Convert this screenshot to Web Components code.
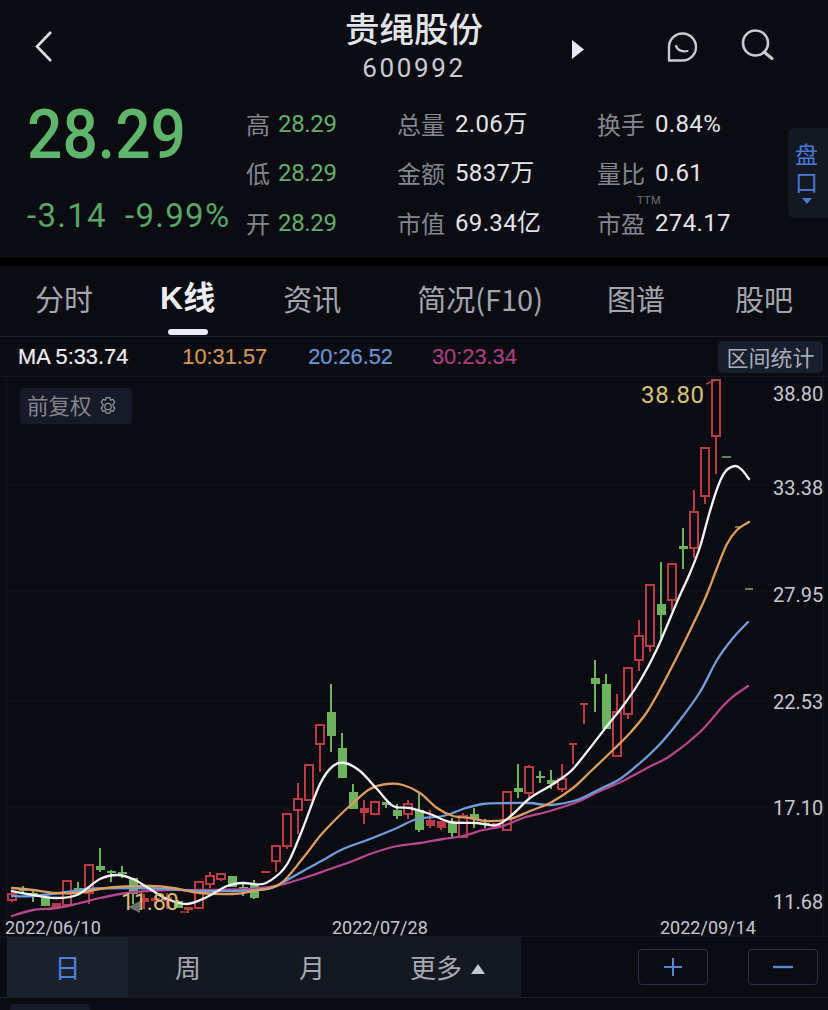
<!DOCTYPE html>
<html lang="zh">
<head>
<meta charset="utf-8">
<title>贵绳股份</title>
<style>
    html, body { margin: 0; padding: 0; background: #0b0c11; }
    body { width: 828px; height: 1010px; overflow: hidden; font-family: Roboto, "Noto Sans CJK SC", sans-serif; }
    .sep { height: 8px; background: #000; }
</style>
</head>
<body>
<stock-title name="贵绳股份" code="600992"></stock-title>
<quote-panel>
    <stat-cell slot="c1" label="高" tone="green">28.29</stat-cell>
    <stat-cell slot="c1" label="低" tone="green">28.29</stat-cell>
    <stat-cell slot="c1" label="开" tone="green">28.29</stat-cell>
    <stat-cell slot="c2" label="总量">2.06万</stat-cell>
    <stat-cell slot="c2" label="金额">5837万</stat-cell>
    <stat-cell slot="c2" label="市值">69.34亿</stat-cell>
    <stat-cell slot="c3" label="换手">0.84%</stat-cell>
    <stat-cell slot="c3" label="量比">0.61</stat-cell>
    <stat-cell slot="c3" label="市盈" sup="TTM">274.17</stat-cell>
</quote-panel>
<div class="sep"></div>
<tab-bar>
    <tab-item gap="35">分时</tab-item>
    <tab-item gap="67" active>K线</tab-item>
    <tab-item gap="68">资讯</tab-item>
    <tab-item gap="76">简况(F10)</tab-item>
    <tab-item gap="64">图谱</tab-item>
    <tab-item gap="70">股吧</tab-item>
</tab-bar>
<ma-legend></ma-legend>
<kline-chart></kline-chart>
<period-bar></period-bar>
<foot-stub></foot-stub>

<script>
class StockTitle extends HTMLElement {
    constructor() {
        super();
        const shadow = this.attachShadow({mode: 'open'});
        shadow.innerHTML = `
            <style>
                :host { display: grid; grid-template-columns: 1fr 138px 1fr; height: 90px; background: #0b0c11; }
                .left { padding: 31px 0 0 35px; }
                .mid { text-align: center; color: #e4e5ea; white-space: nowrap; }
                .name { font: 500 34.5px/40px "Noto Sans CJK SC", sans-serif; margin-top: 7px; margin-left: -1px; margin-right: -1px; }
                .code { font: 400 26px/30px Roboto, sans-serif; letter-spacing: 2.6px; color: #c9cbd2; margin: 6px -20px 0; }
                .right { display: flex; align-items: flex-start; padding-top: 30px; }
                svg { display: block; }
            </style>
            <div class="left">
                <svg width="17" height="31" viewBox="0 0 17 31"><path d="M16 1 2 15.5 16 30" fill="none" stroke="#dfe0e5" stroke-width="2.6"/></svg>
            </div>
            <div class="mid">
                <div class="name">${this.getAttribute('name')}</div>
                <div class="code">${this.getAttribute('code')}</div>
            </div>
            <div class="right">
                <svg style="margin:10px 0 0 89px" width="12" height="19" viewBox="0 0 12 19"><path d="M0 0 12 9.5 0 19Z" fill="#e6e8f5"/></svg>
                <svg style="margin:1px 0 0 83px" width="31" height="31" viewBox="0 0 31 31"><path d="M2 29.5V15.5A13.5 13.5 0 1 1 15.5 29.5Z" fill="none" stroke="#c9cbd2" stroke-width="2.4" stroke-linejoin="round"/><path d="M9 15Q11.5 21.5 20.5 20" fill="none" stroke="#c9cbd2" stroke-width="2.2" stroke-linecap="round"/></svg>
                <svg style="margin:-1px 0 0 43px" width="33" height="31" viewBox="0 0 33 31"><circle cx="14.5" cy="14" r="12.5" fill="none" stroke="#c9cbd2" stroke-width="2.6"/><path d="M23 23 31 29.5" stroke="#c9cbd2" stroke-width="3" stroke-linecap="round"/></svg>
            </div>
        `;
    }
}

class StatCell extends HTMLElement {
    constructor() {
        super();
        const shadow = this.attachShadow({mode: 'open'});
        const label = this.getAttribute('label');
        const sup = this.getAttribute('sup');
        const green = this.getAttribute('tone') === 'green';
        shadow.innerHTML = `
            <style>
                :host { display: flex; align-items: center; height: 49.5px; white-space: nowrap; position: relative; }
                .label { font: 400 24px/30px "Noto Sans CJK SC", sans-serif; color: #83868f; margin-right: ${green ? 8 : 10}px; margin-left: -1px; }
                .value { font: 400 24px/30px Roboto, "Noto Sans CJK SC", sans-serif; letter-spacing: ${green ? -0.35 : 0.35}px; color: ${green ? '#63ae6b' : '#e3e4ea'}; }
                .sup { position: absolute; left: 39px; top: -3px; font: 400 11px/12px Roboto, sans-serif; color: #6d7079; letter-spacing: .4px; }
            </style>
            <span class="label">${label}</span><span class="value"><slot></slot></span>
            ${sup ? `<span class="sup">${sup}</span>` : ''}
        `;
    }
}

class QuotePanel extends HTMLElement {
    constructor() {
        super();
        const shadow = this.attachShadow({mode: 'open'});
        shadow.innerHTML = `
            <style>
                :host { display: grid; grid-template-columns: 247px 151px 200px 190px 40px; height: 168px; background: #0b0c11; position: relative; }
                .price { padding-left: 27px; color: #5fb56b; white-space: nowrap; }
                .big { font: 500 68.5px/80px Roboto, sans-serif; transform: scaleX(.91); transform-origin: left top; margin-top: 5px; width: 200px; }
                .chg { font: 400 33px/40px Roboto, sans-serif; color: #58a565; letter-spacing: 1.3px; margin-top: 21px; display: flex; gap: 18px; }
                .col { padding-top: 9px; }
                .side { align-self: start; margin-top: 38px; height: 90px; background: #131823; border-radius: 6px 0 0 6px; color: #4a78d6; font: 400 23px/28px "Noto Sans CJK SC", sans-serif; text-align: center; padding: 11px 3px 0 0; box-sizing: border-box; }
                .side i { display: block; width: 0; margin: 3px auto 0; border: 5px solid transparent; border-top: 6px solid #4a78d6; border-bottom: 0; }
            </style>
            <div class="price">
                <div class="big">28.29</div>
                <div class="chg"><span>-3.14</span><span>-9.99%</span></div>
            </div>
            <div class="col"><slot name="c1"></slot></div>
            <div class="col"><slot name="c2"></slot></div>
            <div class="col"><slot name="c3"></slot></div>
            <div class="side">盘<br>口<i></i></div>
        `;
    }
}

class TabItem extends HTMLElement {
    constructor() {
        super();
        const shadow = this.attachShadow({mode: 'open'});
        const active = this.hasAttribute('active');
        shadow.innerHTML = `
            <style>
                :host { display: block; position: relative; margin-left: ${this.getAttribute('gap')}px; white-space: nowrap; line-height: 65px; font-size: ${active ? 32 : 29}px; color: ${active ? '#eceef6' : '#a2a5ae'}; font-weight: ${active ? 700 : 400}; font-family: ${active ? '"Liberation Sans", ' : ''}"Noto Sans CJK SC", sans-serif; }
                i { position: absolute; left: 8px; width: 40px; top: 63px; height: 6px; border-radius: 3px; background: #e8eaf5; }
            </style>
            <slot></slot>${active ? '<i></i>' : ''}
        `;
    }
}

class TabBar extends HTMLElement {
    constructor() {
        super();
        const shadow = this.attachShadow({mode: 'open'});
        shadow.innerHTML = `
            <style>
                :host { display: flex; height: 70px; background: #0b0c11; border-bottom: 1px solid #1e2027; }
            </style>
            <slot></slot>
        `;
    }
}

class MaLegend extends HTMLElement {
    constructor() {
        super();
        const shadow = this.attachShadow({mode: 'open'});
        const items = [
            ['MA 5:33.74', '#eeeff2', 18],
            ['10:31.57', '#cf955a', 54],
            ['20:26.52', '#6b94d2', 41],
            ['30:23.34', '#a73f7e', 39]
        ];
        shadow.innerHTML = `
            <style>
                :host { display: flex; align-items: center; height: 39px; background: #0b0c11; border-bottom: 1px solid #15171d; font: 400 21.8px/41px "Liberation Sans", sans-serif; white-space: nowrap; }
                span { -webkit-text-stroke: .2px currentColor; }
                button { all: unset; margin-left: auto; margin-right: 5px; width: 105px; height: 32px; text-align: center; background: #191e2c; border-radius: 5px; color: #a6abb9; font: 400 22px/31px "Noto Sans CJK SC", sans-serif; }
            </style>
            ${items.map(([text, color, gap]) => `<span style="color:${color};margin-left:${gap}px">${text}</span>`).join('')}
            <button>区间统计</button>
        `;
    }
}

class KlineChart extends HTMLElement {
    constructor() {
        super();
        const shadow = this.attachShadow({mode: 'open'});
        // x, wick top, wick bottom, body top, body bottom, kind (h hollow red, r solid red, g green)
        const candles = [
            [12,891,901,893,899,'h'],[23,885,893,888,890,'g'],[33,890,901,892,895,'g'],[45,896,905,897,905,'g'],
            [56,902,907,902,907,'r'],[67,880,904,880,904,'h'],[78,881,893,887,891,'g'],[89,864,903,864,892,'h'],
            [100,847,871,865,869,'g'],[111,869,881,870,872,'g'],[122,865,877,871,873,'g'],[133,877,903,877,893,'g'],
            [144,893,908,897,901,'r'],[155,895,905,897,900,'r'],[167,892,908,896,900,'r'],[178,899,907,900,907,'g'],
            [188,906,912,906,909,'r'],[199,881,907,881,907,'h'],[210,871,887,875,883,'h'],[221,873,880,873,878,'h'],
            [232,875,886,875,886,'g'],[243,883,895,886,890,'g'],[254,879,898,883,897,'g'],[265,870,872,870,872,'r'],
            [276,844,871,845,860,'h'],[287,813,848,813,845,'h'],[298,782,833,798,809,'h'],[309,764,799,764,799,'h'],
            [320,724,771,724,743,'h'],[331,683,751,711,735,'g'],[342,732,777,747,777,'g'],[353,783,808,791,808,'g'],
            [364,799,823,807,812,'r'],[375,801,813,801,813,'h'],[386,801,807,801,804,'g'],[397,803,818,809,815,'g'],
            [408,799,818,803,813,'h'],[419,792,831,809,829,'g'],[430,809,827,819,825,'r'],[441,820,829,820,827,'r'],
            [452,817,837,822,832,'g'],[463,812,836,815,836,'h'],[474,807,827,813,818,'g'],[485,818,827,822,824,'g'],
            [496,822,827,822,827,'r'],[507,791,829,791,829,'h'],[518,763,797,787,791,'g'],[529,764,798,766,792,'h'],
            [540,770,782,775,777,'g'],[551,769,788,779,783,'g'],[562,763,791,778,788,'h'],[573,743,763,743,745,'t'],
            [584,703,723,703,705,'t'],[595,659,711,677,683,'g'],[606,673,728,683,728,'g'],[617,693,755,711,755,'h'],
            [628,667,718,667,713,'h'],[639,619,670,635,659,'h'],[650,584,651,584,645,'h'],[661,561,637,603,614,'g'],
            [672,563,610,563,599,'h'],[683,527,568,545,548,'g'],[694,489,557,511,547,'h'],[705,447,503,447,495,'h'],
            [716,379,473,379,435,'h']
        ];
        const lines = [
            ['#b5468f', [[12,915],[33,909],[57,907],[80,902],[100,897],[120,893],[147,890],[167,889],[200,889],[250,888],[280,884],[310,875],[330,868],[353,860],[370,853],[397,845],[420,842],[443,838],[463,835],[483,829],[503,825],[523,817],[550,810],[577,801],[600,790],[623,780],[647,767],[670,755],[700,731],[723,705],[735,694],[748,685]]],
            ['#6f9ddc', [[12,895],[33,895],[67,891],[87,888],[133,887],[167,888],[200,890],[233,890],[267,888],[280,883],[303,870],[325,858],[343,848],[370,838],[397,827],[417,818],[443,815],[463,808],[483,803],[510,802],[530,802],[550,804],[577,799],[600,788],[620,778],[640,762],[660,743],[680,719],[700,691],[717,659],[733,637],[748,621]]],
            ['#dd9d5f', [[12,887],[33,889],[55,892],[77,892],[100,888],[117,886],[150,885],[173,887],[200,892],[233,893],[253,890],[280,883],[303,857],[320,835],[337,817],[353,802],[370,788],[387,783],[403,784],[420,792],[437,807],[453,815],[470,817],[487,820],[510,818],[530,810],[550,802],[573,787],[590,771],[613,749],[630,732],[647,711],[663,683],[680,650],[697,615],[707,593],[717,567],[727,543],[737,529],[749,521]]],
            ['#f4f4f6', [[12,890],[33,894],[55,897],[77,894],[100,878],[117,874],[133,878],[150,888],[167,898],[187,903],[207,896],[227,885],[243,882],[263,883],[280,872],[290,858],[303,827],[320,783],[333,765],[345,762],[360,770],[377,788],[393,805],[410,807],[430,813],[450,821],[477,822],[497,824],[513,813],[530,797],[550,785],[562,777],[573,768],[590,747],[607,725],[623,705],[640,680],[657,648],[677,601],[690,572],[700,546],[708,517],[717,488],[725,471],[735,465],[742,469],[749,478]]]
        ];
        const labels = [
            ['38.80',773,393,'axis'],['33.38',773,487,'axis'],['27.95',773,594,'axis'],['22.53',773,701,'axis'],['17.10',773,807,'axis'],['11.68',773,901,'axis'],
            ['2022/06/10',5,927,'date'],['2022/07/28',332,927,'date'],['2022/09/14',660,927,'date'],
            ['38.80',641,394,'peak'],['11.80',121,901,'low']
        ];
        const grid = [484, 590, 700, 806].map(y => `<path d="M6 ${y}H768" stroke="#13151b"/>`).join('');
        shadow.innerHTML = `
            <style>
                :host { display: block; position: relative; height: 559px; background: #0b0c11; }
                svg { position: absolute; left: 0; top: 0; }
                span { position: absolute; white-space: nowrap; font-family: Roboto, sans-serif; line-height: 1; transform: translateY(-50%); }
                .axis { font-size: 20px; color: #c4c8d3; }
                .date { font-size: 18px; color: #c4c8d3; }
                .peak { font-size: 24px; letter-spacing: .7px; color: #d6c279; }
                .low { font-size: 23px; letter-spacing: 0; color: #d2bc72; }
                .rights { position: absolute; left: 20px; top: 11px; width: 112px; height: 36px; background: #161b27; border-radius: 4px; display: flex; align-items: center; box-sizing: border-box; padding: 0 0 3px 7px; gap: 7px; color: #83868f; font: 400 21.5px/33px "Noto Sans CJK SC", sans-serif; }
            </style>
            <svg width="828" height="559" viewBox="0 376 828 559">
                <path d="M6.5 376V935" stroke="#13151b"/><path d="M823.5 376V935" stroke="#13151b"/>
                ${grid}
                ${this.drawCandles(candles)}
                <path d="M722 456H731M735 526H742M745 588H753" stroke="#7fa868" stroke-width="1.6"/>
                <path d="M706 383 716 379" stroke="#a8474c" stroke-width="1.4"/>
                <path d="M180 911H187" stroke="#b23c44" stroke-width="1.4"/>
                <path d="M140 900V912L128 906Z" fill="#6e6f72"/>
                ${lines.map(([color, pts]) => `<path d="${this.smooth(pts)}" fill="none" stroke="${color}" stroke-width="2.3" stroke-linecap="round"/>`).join('')}
            </svg>
            ${labels.map(([text, x, y, cls]) => `<span class="${cls}" style="left:${x}px;top:${y - 376}px">${text}</span>`).join('')}
            <div class="rights">前复权
                <svg style="position:static;margin-top:3px" width="18" height="19" viewBox="1.2 .8 15.6 16.4" fill="none" stroke="#8d9099" stroke-width="1.1"><path d="M7.4 1.2h3.2l.6 2.3 2.1-.7 1.6 2.6-1.6 1.7.1 1.8 1.5 1.6-1.6 2.7-2.1-.7-.6 2.3H7.4l-.6-2.3-2.1.7-1.6-2.7 1.5-1.6.1-1.8-1.6-1.7 1.6-2.6 2.1.7z" stroke-linejoin="round"/><circle cx="9" cy="9" r="2.8"/></svg>
            </div>
        `;
    }

    drawCandles(candles) {
        const red = '#b93b44', green = '#6db25f';
        return candles.map(([x, high, low, top, bottom, kind]) => {
            const stroke = kind === 'g' ? green : red;
            let out = `<path d="M${x} ${high}V${low}" stroke="${stroke}" stroke-width="2"/>`;
            if (kind === 'h') {
                out += `<rect x="${x - 4}" y="${top}" width="8" height="${bottom - top}" fill="#0b0c11" stroke="${stroke}" stroke-width="2"/>`;
            } else if (kind === 't') {
                out += `<path d="M${x - 4} ${high}H${x + 4}" stroke="${stroke}" stroke-width="2"/>`;
            } else {
                out += `<rect x="${x - 4}" y="${top}" width="9" height="${bottom - top}" fill="${stroke}"/>`;
            }
            return out;
        }).join('');
    }

    // catmull-rom through the points
    smooth(pts) {
        let d = `M${pts[0][0]} ${pts[0][1]}`;
        for (let i = 0; i < pts.length - 1; i++) {
            const p0 = pts[i - 1] || pts[i], p1 = pts[i], p2 = pts[i + 1], p3 = pts[i + 2] || p2;
            const c1x = p1[0] + (p2[0] - p0[0]) / 6, c1y = p1[1] + (p2[1] - p0[1]) / 6;
            const c2x = p2[0] - (p3[0] - p1[0]) / 6, c2y = p2[1] - (p3[1] - p1[1]) / 6;
            d += `C${c1x.toFixed(1)} ${c1y.toFixed(1)} ${c2x.toFixed(1)} ${c2y.toFixed(1)} ${p2[0]} ${p2[1]}`;
        }
        return d;
    }
}

class PeriodBar extends HTMLElement {
    constructor() {
        super();
        const shadow = this.attachShadow({mode: 'open'});
        shadow.innerHTML = `
            <style>
                :host { display: flex; align-items: center; height: 62px; background: #0b0c11; border-bottom: 1px solid #1c1e25; border-top: 1px solid #14161c; box-sizing: border-box; font: 400 26px/60px "Noto Sans CJK SC", sans-serif; color: #a6a9b2; position: relative; }
                .seg { display: flex; margin-left: 7px; width: 514px; height: 100%; background: #141821; }
                .seg div { text-align: center; white-space: nowrap; box-sizing: border-box; }
                .on { width: 121px; background: #1a202c; color: #4f7fe0; }
                .seg i { display: inline-block; margin-left: 9px; vertical-align: 4px; border: 7.5px solid transparent; border-top: 0; border-bottom: 10px solid #c3c8d8; }
                .zoom { width: 70px; height: 36px; border: 1px solid #2b3143; border-radius: 4px; box-sizing: border-box; display: flex; align-items: center; justify-content: center; }
            </style>
            <div class="seg">
                <div class="on">日</div>
                <div style="width:120px">周</div>
                <div style="width:128px">月</div>
                <div style="width:145px;text-align:left;padding-left:34px">更多<i></i></div>
            </div>
            <div class="zoom" style="margin-left:117px">
                <svg width="20" height="20" viewBox="0 0 20 20"><path d="M10 1V19M1 10H19" stroke="#5584de" stroke-width="2"/></svg>
            </div>
            <div class="zoom" style="margin-left:40px">
                <svg width="20" height="4" viewBox="0 0 20 4"><path d="M0 2H20" stroke="#5a86d8" stroke-width="2.4"/></svg>
            </div>
        `;
    }
}

class FootStub extends HTMLElement {
    constructor() {
        super();
        const shadow = this.attachShadow({mode: 'open'});
        shadow.innerHTML = `
            <style>
                :host { display: block; width: 80px; height: 7px; margin: 6px 0 0 10px; background: #151a26; border-radius: 3px 3px 0 0; }
            </style>
        `;
    }
}

customElements.define('stock-title', StockTitle);
customElements.define('stat-cell', StatCell);
customElements.define('quote-panel', QuotePanel);
customElements.define('tab-item', TabItem);
customElements.define('tab-bar', TabBar);
customElements.define('ma-legend', MaLegend);
customElements.define('kline-chart', KlineChart);
customElements.define('period-bar', PeriodBar);
customElements.define('foot-stub', FootStub);
</script>
</body>
</html>
